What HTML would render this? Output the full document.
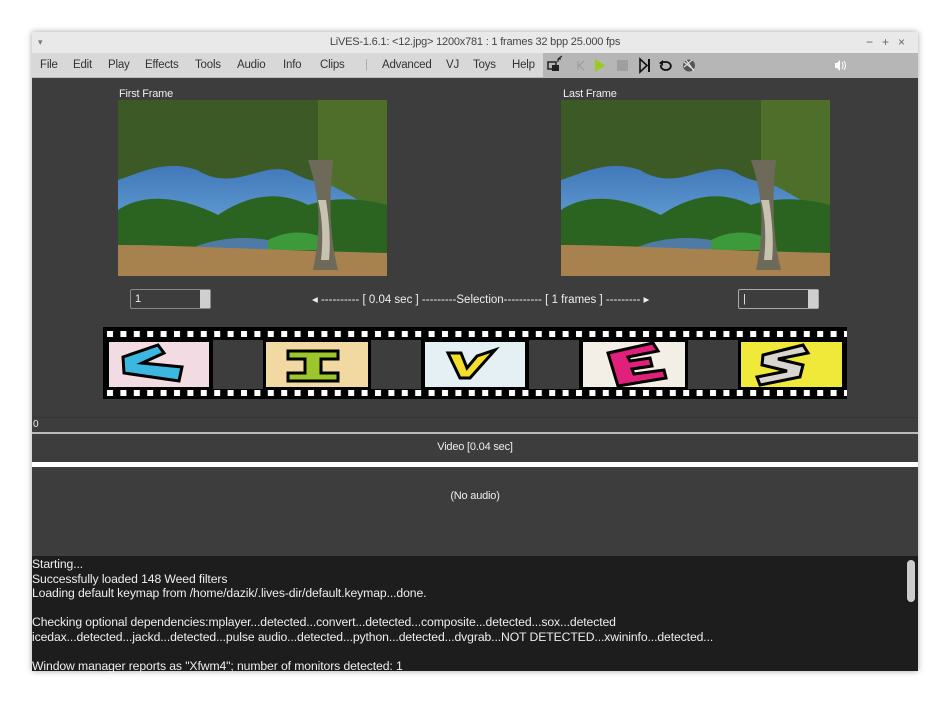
<!DOCTYPE html>
<html><head><meta charset="utf-8"><style>
*{margin:0;padding:0;box-sizing:border-box}
body{width:950px;height:704px;background:#fff;position:relative;overflow:hidden;font-family:"Liberation Sans",sans-serif}
.a{position:absolute}
.win{left:32px;top:32px;width:886px;height:639px;background:#3d3d3d;box-shadow:0 0 6px rgba(0,0,0,.35)}
.title{left:0;top:0;width:886px;height:21px;background:#e9e9e9;color:#444;font-size:11px;text-align:center;line-height:21px;letter-spacing:-.2px}
.menu{left:0;top:21px;width:886px;height:25px;background:#d8d8d8;border-bottom:1px solid #bbb}
.menu span{position:absolute;top:6px;font-size:11.5px;color:#333;letter-spacing:-.2px}
.tb{left:511px;top:21px;width:375px;height:25px;background:#b6b6b6}
.lbl{color:#eee;font-size:11px;letter-spacing:-.2px}
.spin{background:#3d3d3d;border:1px solid #888;border-radius:2px;height:20px;color:#eee;font-size:11px;padding:3px 0 0 4px}
.spin i{position:absolute;right:0;top:0;width:10px;height:18px;background:#cfcfcf}
.log{left:0;top:524px;width:886px;height:115px;background:#1d1d1d;color:#eee;font-size:12.2px;line-height:14.6px;padding-top:1px;letter-spacing:-.1px;white-space:pre}
</style></head><body>
<div class="a win">
 <div class="a title">LiVES-1.6.1: &lt;12.jpg&gt; 1200x781 : 1 frames 32 bpp 25.000 fps
  <span class="a" style="left:6px;top:0;font-size:9px;color:#777">▾</span>
  <span class="a" style="left:834px;top:0;color:#666;font-size:12px;letter-spacing:9px">−+×</span>
 </div>
 <div class="a menu">
  <span style="left:8px">File</span><span style="left:41px">Edit</span><span style="left:76px">Play</span><span style="left:113px">Effects</span><span style="left:163px">Tools</span><span style="left:205px">Audio</span><span style="left:251px">Info</span><span style="left:288px">Clips</span>
  <span style="left:333px;color:#aaa">|</span>
  <span style="left:350px">Advanced</span><span style="left:414px">VJ</span><span style="left:441px">Toys</span><span style="left:480px">Help</span>
 </div>
 <div class="a tb">
  <svg width="375" height="25" class="a" style="left:0;top:0">
   <rect x="5" y="9" width="8" height="7" fill="none" stroke="#222" stroke-width="1.5"/><rect x="9" y="12" width="7" height="6" fill="#222"/><path d="M15 6 l4 -3 M15 6 h3 M15 6 v3" stroke="#222" stroke-width="1.2"/>
   <path d="M35 8v9M41 8l-5 4.5 5 4.5" stroke="#999" fill="none"/>
   <path d="M52 6 l10 6.5 -10 6.5z" fill="#9acb1e"/>
   <rect x="74" y="7" width="11" height="11" fill="#9f9f9f"/>
   <path d="M97 6l7 6.5-7 6.5z" fill="none" stroke="#111" stroke-width="1.6"/><path d="M106 6v13" stroke="#111" stroke-width="2"/>
   <path d="M118 12a5 4 0 1 0 5 -3h-3" fill="none" stroke="#111" stroke-width="1.8"/><path d="M116 10l4 -3v6z" fill="#111"/>
   <circle cx="146" cy="12.5" r="6" fill="#555"/><path d="M141 9l10 8M143 7l8 11M141 14l8-7" stroke="#ddd" stroke-width="1.2"/>
   <path d="M292 10h2l3-3v11l-3-3h-2z" fill="#fff"/><path d="M299 9q2 3.5 0 7M301 8q3 4.5 0 9" stroke="#fff" fill="none"/>
  </svg>
 </div>
 <div class="a lbl" style="left:87px;top:56px">First Frame</div>
 <div class="a lbl" style="left:531px;top:56px">Last Frame</div>
 <svg width="0" height="0" class="a"><defs>
  <linearGradient id="sk" x1="0" y1="0" x2="0" y2="1"><stop offset="0" stop-color="#1f4f9e"/><stop offset="1" stop-color="#7bbce8"/></linearGradient>
  <g id="tree">
   <rect width="269" height="176" fill="url(#sk)"/>
   <path d="M0 0h269v70c-30 10-60 20-90 5c-30-20-60 20-100 -5c-30-10-50 0-79 10z" fill="#3c5a26"/>
   <path d="M200 0h69v110c-20 0-40-20-69-30z" fill="#4d6f2a"/>
   <path d="M0 110c30-20 70-10 100 5c30 -20 60-25 90 -10c30-10 60 -5 79 0v50h-269z" fill="#2a6420"/>
   <path d="M70 150c20-10 50-15 80-10l20 10z" fill="#4f7aa6"/>
   <path d="M150 140c20-10 40-10 60 0v10h-60z" fill="#3d9a3a"/>
   <path d="M0 145c60 0 140 5 269 8v23h-269z" fill="#a8824e"/>
   <path d="M190 60c10 30 15 60 5 110h25c-10-40-8-80 -5-110z" fill="#6d6a5a"/>
   <path d="M200 100c5 20 5 40 3 60h8c2-20 0-40-3-60z" fill="#c8c2b0"/>
  </g>
 </defs></svg>
 <svg class="a" style="left:86px;top:68px" width="269" height="176"><use href="#tree"/></svg>
 <svg class="a" style="left:529px;top:68px" width="269" height="176"><use href="#tree"/></svg>
 <div class="a spin" style="left:98px;top:257px;width:81px">1<i></i></div>
 <div class="a spin" style="left:706px;top:257px;width:81px;border-color:#aaa">|<i></i></div>
 <div class="a lbl" style="left:280px;top:260px;font-size:11.5px;letter-spacing:0">◂ ---------- [ 0.04 sec ] ---------Selection---------- [ 1 frames ] --------- ▸</div>
 <svg class="a" style="left:71px;top:295px" width="744" height="72">
  <defs><pattern id="pf" width="13.4" height="72" patternUnits="userSpaceOnUse"><rect x="4" y="4" width="6" height="6" fill="#fff"/><rect x="4" y="63" width="6" height="6" fill="#fff"/></pattern></defs>
  <rect width="744" height="72" fill="#000"/><rect width="744" height="72" fill="url(#pf)"/>
  <rect x="110" y="13" width="50" height="49" fill="#3d3d3d"/><rect x="268" y="13" width="50" height="49" fill="#3d3d3d"/><rect x="426" y="13" width="50" height="49" fill="#3d3d3d"/><rect x="585" y="13" width="50" height="49" fill="#3d3d3d"/>
  <rect x="6" y="15" width="100" height="45" fill="#f3dbe4"/><path d="M20 30l35-12 6 8-22 10 40 4-3 14-55-8z" fill="#3cb8e0" stroke="#000" stroke-width="3"/>
  <rect x="163" y="15" width="102" height="45" fill="#f2d9a2"/><path d="M185 24h50v8h-17v14h17v8h-50v-8h17v-14h-17z" fill="#9cc62b" stroke="#000" stroke-width="3"/>
  <rect x="322" y="15" width="100" height="45" fill="#e5f0f5"/><path d="M345 26l12 25h10l25-28-18 6-10 12-6-15z" fill="#f3df2b" stroke="#000" stroke-width="3"/>
  <rect x="480" y="15" width="102" height="45" fill="#f4efe6"/><path d="M505 26l45-10 5 8-30 6 2 4 20-3 2 8-20 3 2 5 30-4 2 8-48 8z" fill="#e0207a" stroke="#000" stroke-width="3"/>
  <rect x="638" y="15" width="101" height="45" fill="#f1e93a"/><path d="M660 28l40-10 5 8-30 6 25 6-3 12-40 8-3-8 30-6-25-6z" fill="#d8d4d0" stroke="#000" stroke-width="3"/>
 </svg>
 <div class="a" style="left:0;top:385px;width:886px;height:1px;background:#353535"></div>
 <div class="a lbl" style="left:1px;top:387px;font-size:10px">0</div>
 <div class="a" style="left:0;top:400px;width:886px;height:2px;background:#bbb"></div>
 <div class="a lbl" style="left:0;top:409px;width:886px;text-align:center">Video [0.04 sec]</div>
 <div class="a" style="left:0;top:430px;width:886px;height:5px;background:#fff"></div>
 <div class="a lbl" style="left:0;top:458px;width:886px;text-align:center">(No audio)</div>
 <div class="a log">Starting...
Successfully loaded 148 Weed filters
Loading default keymap from /home/dazik/.lives-dir/default.keymap...done.

Checking optional dependencies:mplayer...detected...convert...detected...composite...detected...sox...detected
icedax...detected...jackd...detected...pulse audio...detected...python...detected...dvgrab...NOT DETECTED...xwininfo...detected...

Window manager reports as "Xfwm4"; number of monitors detected: 1</div>
 <div class="a" style="left:875px;top:528px;width:8px;height:42px;background:#ccc;border-radius:4px"></div>
</div>
</body></html>
